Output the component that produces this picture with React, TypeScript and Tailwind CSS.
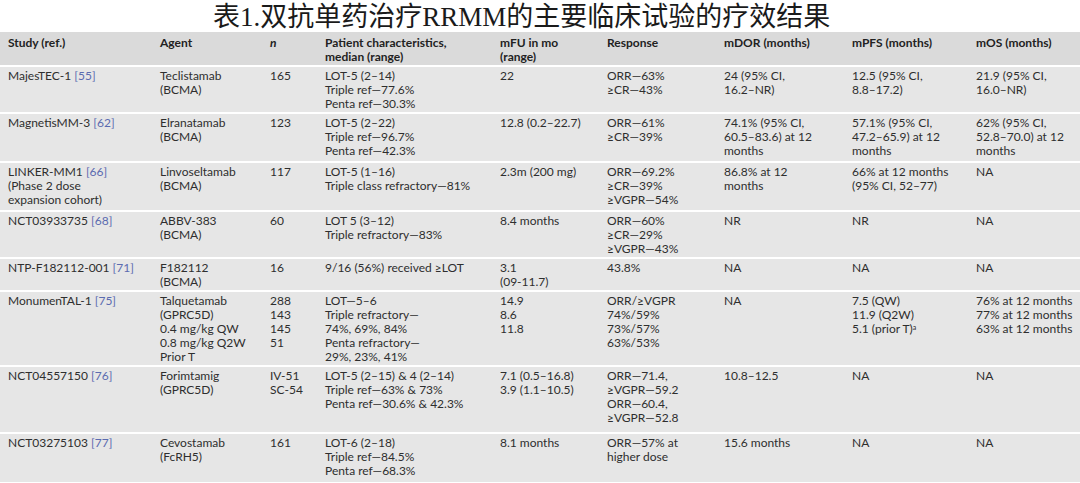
type Row = {
  study: string[];
  ref: string;
  agent: string[];
  n: string[];
  pt: string[];
  mfu: string[];
  resp: string[];
  dor: string[];
  pfs: string[];
  os: string[];
  h: string;
};

const rows: Row[] = [
  {
    study: ['MajesTEC-1'],
    ref: '55',
    agent: ['Teclistamab', '(BCMA)'],
    n: ['165'],
    pt: ['LOT-5 (2–14)', 'Triple ref—77.6%', 'Penta ref—30.3%'],
    mfu: ['22'],
    resp: ['ORR—63%', '≥CR—43%'],
    dor: ['24 (95% CI,', '16.2–NR)'],
    pfs: ['12.5 (95% CI,', '8.8–17.2)'],
    os: ['21.9 (95% CI,', '16.0–NR)'],
    h: 'h-[47px]',
  },
  {
    study: ['MagnetisMM-3'],
    ref: '62',
    agent: ['Elranatamab', '(BCMA)'],
    n: ['123'],
    pt: ['LOT-5 (2–22)', 'Triple ref—96.7%', 'Penta ref—42.3%'],
    mfu: ['12.8 (0.2–22.7)'],
    resp: ['ORR—61%', '≥CR—39%'],
    dor: ['74.1% (95% CI,', '60.5–83.6) at 12', 'months'],
    pfs: ['57.1% (95% CI,', '47.2–65.9) at 12', 'months'],
    os: ['62% (95% CI,', '52.8–70.0) at 12', 'months'],
    h: 'h-[49px]',
  },
  {
    study: ['LINKER-MM1', '(Phase 2 dose', 'expansion cohort)'],
    ref: '66',
    agent: ['Linvoseltamab', '(BCMA)'],
    n: ['117'],
    pt: ['LOT-5 (1–16)', 'Triple class refractory—81%'],
    mfu: ['2.3m (200 mg)'],
    resp: ['ORR—69.2%', '≥CR—39%', '≥VGPR—54%'],
    dor: ['86.8% at 12', 'months'],
    pfs: ['66% at 12 months', '(95% CI, 52–77)'],
    os: ['NA'],
    h: 'h-[49px]',
  },
  {
    study: ['NCT03933735'],
    ref: '68',
    agent: ['ABBV-383', '(BCMA)'],
    n: ['60'],
    pt: ['LOT 5 (3–12)', 'Triple refractory—83%'],
    mfu: ['8.4 months'],
    resp: ['ORR—60%', '≥CR—29%', '≥VGPR—43%'],
    dor: ['NR'],
    pfs: ['NR'],
    os: ['NA'],
    h: 'h-[45px]',
  },
  {
    study: ['NTP-F182112-001'],
    ref: '71',
    agent: ['F182112', '(BCMA)'],
    n: ['16'],
    pt: ['9/16 (56%) received ≥LOT'],
    mfu: ['3.1', '(09-11.7)'],
    resp: ['43.8%'],
    dor: ['NA'],
    pfs: ['NA'],
    os: ['NA'],
    h: 'h-[33px]',
  },
  {
    study: ['MonumenTAL-1'],
    ref: '75',
    agent: ['Talquetamab', '(GPRC5D)', '0.4 mg/kg QW', '0.8 mg/kg Q2W', 'Prior T'],
    n: ['288', '143', '145', '51'],
    pt: ['LOT—5–6', 'Triple refractory—', '74%, 69%, 84%', 'Penta refractory—', '29%, 23%, 41%'],
    mfu: ['14.9', '8.6', '11.8'],
    resp: ['ORR/≥VGPR', '74%/59%', '73%/57%', '63%/53%'],
    dor: ['NA'],
    pfs: ['7.5 (QW)', '11.9 (Q2W)', '5.1 (prior T)'],
    os: ['76% at 12 months', '77% at 12 months', '63% at 12 months'],
    h: 'h-[74px]',
  },
  {
    study: ['NCT04557150'],
    ref: '76',
    agent: ['Forimtamig', '(GPRC5D)'],
    n: ['IV-51', 'SC-54'],
    pt: ['LOT-5 (2–15) & 4 (2–14)', 'Triple ref—63% & 73%', 'Penta ref—30.6% & 42.3%'],
    mfu: ['7.1 (0.5–16.8)', '3.9 (1.1–10.5)'],
    resp: ['ORR—71.4,', '≥VGPR—59.2', 'ORR—60.4,', '≥VGPR—52.8'],
    dor: ['10.8–12.5'],
    pfs: ['NA'],
    os: ['NA'],
    h: 'h-[67px]',
  },
  {
    study: ['NCT03275103'],
    ref: '77',
    agent: ['Cevostamab', '(FcRH5)'],
    n: ['161'],
    pt: ['LOT-6 (2–18)', 'Triple ref—84.5%', 'Penta ref—68.3%'],
    mfu: ['8.1 months'],
    resp: ['ORR—57% at', 'higher dose'],
    dor: ['15.6 months'],
    pfs: ['NA'],
    os: ['NA'],
    h: 'h-[49px]',
  },
];

function Lines({ items }: { items: string[] }) {
  return (
    <>
      {items.map((t, i) => (
        <div key={i} className="whitespace-nowrap">
          {t}
          {t === '5.1 (prior T)' && <sup className="text-[7px]">a</sup>}
        </div>
      ))}
    </>
  );
}

const td = 'pl-2 pt-[2px] align-top';
const th = 'pl-2 pt-[4px] align-top';

export default function App() {
  return (
    <div className="w-[1080px] h-[483px] overflow-hidden bg-white text-[#2e2e2e]">
      <div
        className="h-[32px] pl-[213px] pt-[2px] text-[27px] leading-[30px] text-[#1a1a1a] whitespace-nowrap"
        style={{ fontFamily: '"Liberation Serif", "Noto Sans CJK SC", serif' }}
      >
        表1.双抗单药治疗RRMM的主要临床试验的疗效结果
      </div>
      <table
        className="w-full table-fixed border-collapse bg-[#e6e6e6] text-[12px] leading-[14.2px]"
        style={{ fontFamily: 'Lato, "Noto Sans", sans-serif' }}
      >
        <colgroup>
          <col className="w-[152px]" />
          <col className="w-[110px]" />
          <col className="w-[55px]" />
          <col className="w-[175px]" />
          <col className="w-[107px]" />
          <col className="w-[117px]" />
          <col className="w-[128px]" />
          <col className="w-[124px]" />
          <col />
        </colgroup>
        <thead>
          <tr className="h-[34px] bg-[#dadada] text-left font-bold text-[#222]">
            <th className={th}>Study (ref.)</th>
            <th className={th}>Agent</th>
            <th className={`${th} italic`}>n</th>
            <th className={th}>
              Patient characteristics,
              <br />
              median (range)
            </th>
            <th className={th}>
              mFU in mo
              <br />
              (range)
            </th>
            <th className={th}>Response</th>
            <th className={th}>mDOR (months)</th>
            <th className={th}>mPFS (months)</th>
            <th className={th}>mOS (months)</th>
          </tr>
        </thead>
        <tbody>
          {rows.map((r, idx) => (
            <tr key={idx} className={`${r.h} border-t-2 border-white`}>
              <td className={td}>
                {r.study.map((s, i) => (
                  <div key={i} className="whitespace-nowrap">
                    {s}
                    {i === 0 && (
                      <>
                        {' '}
                        <span className="text-[#5b6bb0]">[{r.ref}]</span>
                      </>
                    )}
                  </div>
                ))}
              </td>
              <td className={td}>
                <Lines items={r.agent} />
              </td>
              <td className={td}>
                <Lines items={r.n} />
              </td>
              <td className={td}>
                <Lines items={r.pt} />
              </td>
              <td className={td}>
                <Lines items={r.mfu} />
              </td>
              <td className={td}>
                <Lines items={r.resp} />
              </td>
              <td className={td}>
                <Lines items={r.dor} />
              </td>
              <td className={td}>
                <Lines items={r.pfs} />
              </td>
              <td className={td}>
                <Lines items={r.os} />
              </td>
            </tr>
          ))}
        </tbody>
      </table>
    </div>
  );
}
